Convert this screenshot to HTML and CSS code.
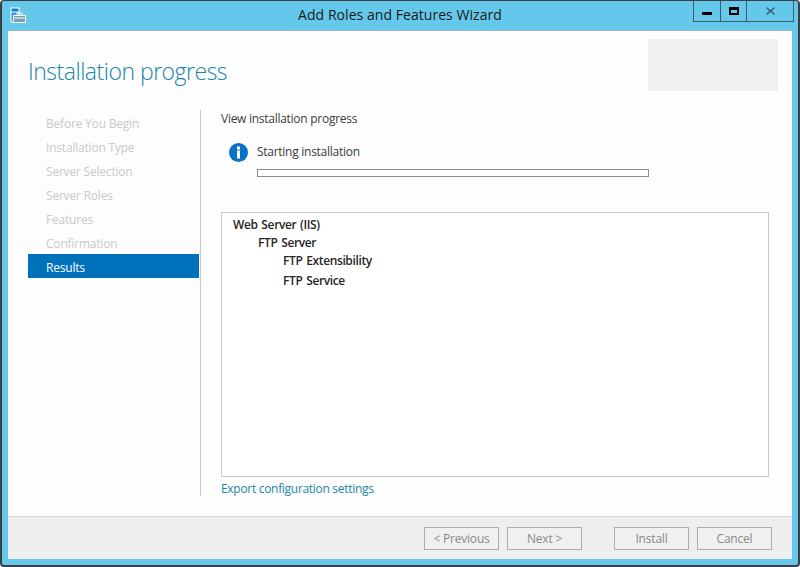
FILE: index.html
```html
<!DOCTYPE html>
<html lang="en">
<head>
<meta charset="utf-8">
<title>Add Roles and Features Wizard</title>
<link rel="stylesheet" href="styles.css">
</head>
<body>
<div class="window">
  <header class="titlebar">
    <svg class="app-icon" width="18" height="18" viewBox="0 0 18 18">
      <rect x="0.5" y="0.5" width="9" height="15" fill="#fff"/>
      <rect x="1.5" y="1.5" width="7" height="3" fill="#0f7fd6"/>
      <rect x="1.5" y="5.5" width="7" height="9" fill="#2f9ae8"/>
      <path d="M3 8h13v8H3z" fill="#fff"/>
      <path d="M4 9h11v6H4z" fill="#7d9bb2"/>
      <path d="M7 8V6h5v2" fill="none" stroke="#fff"/>
      <path d="M4 11h11" stroke="#fff"/>
    </svg>
    <h1 class="title">Add Roles and Features Wizard</h1>
    <div class="caption">
      <div class="cap cap-min"><span class="min-glyph"></span></div>
      <div class="cap cap-max"><span class="max-glyph"></span></div>
      <div class="cap cap-close">
        <svg width="9" height="8" viewBox="0 0 9 8"><path d="M1 0l3.5 3L8 0l1 1-3 3 3 3-1 1-3.500-3L1 8 0 7l3-3-3-3z" fill="#37677f"/></svg>
      </div>
    </div>
  </header>
  <main class="client">
    <div class="banner">
      <h2 class="heading">Installation progress</h2>
      <div class="server-box"></div>
    </div>
    <div class="middle">
      <nav class="steps">
        <a class="step">Before You Begin</a>
        <a class="step">Installation Type</a>
        <a class="step">Server Selection</a>
        <a class="step">Server Roles</a>
        <a class="step">Features</a>
        <a class="step">Confirmation</a>
        <a class="step active">Results</a>
      </nav>
      <section class="content">
        <p class="view">View installation progress</p>
        <div class="status">
          <svg class="info" width="19" height="19" viewBox="0 0 19 19">
            <circle cx="9.500" cy="9.500" r="9.500" fill="#0a72c4"/>
            <rect x="8" y="3.500" width="3" height="3" fill="#fff"/>
            <rect x="8" y="7.500" width="3" height="8" fill="#fff"/>
          </svg>
          <div class="status-main">
            <div class="status-text">Starting installation</div>
            <div class="progress"></div>
          </div>
        </div>
        <div class="listbox">
          <div class="l0">Web Server (IIS)</div>
          <div class="l1">FTP Server</div>
          <div class="l2">FTP Extensibility</div>
          <div class="l2 gap">FTP Service</div>
        </div>
        <a class="link">Export configuration settings</a>
      </section>
    </div>
    <footer class="footer">
      <button class="btn">&lt; Previous</button>
      <button class="btn next">Next &gt;</button>
      <button class="btn install">Install</button>
      <button class="btn">Cancel</button>
    </footer>
  </main>
</div>
</body>
</html>
```
FILE: styles.css
```css
* { box-sizing: border-box; }
html, body { margin: 0; padding: 0; background: #fff; }
body { width: 800px; height: 567px; overflow: hidden; font-family: "Open Sans", "Noto Sans", sans-serif; font-size: 12px; letter-spacing: -0.27px; color: #3c3c3c; }
.window { width: 800px; height: 567px; background: #64c8eb; border-left: 2px solid #3a3f44; border-top: 1px solid #3a3f44; border-right: 2px solid #3a3f44; border-bottom: 2px solid #3a3f44; border-radius: 4px; display: flex; flex-direction: column; padding: 0 6px 6px 6px; }
.titlebar { height: 29px; flex: none; display: flex; align-items: flex-start; position: relative; }
.app-icon { position: absolute; left: 2px; top: 6px; }
.title { margin: 0; width: 100%; text-align: center; font-weight: 400; font-size: 14px; letter-spacing: 0.05px; line-height: 28px; color: #1a1a1a; }
.caption { position: absolute; right: -2px; top: 0; display: flex; height: 21px; border: 1px solid #3d5a6c; border-top: 0; }
.cap { height: 20px; display: flex; justify-content: center; }
.cap-min { width: 27px; border-right: 1px solid #3d5a6c; }
.cap-max { width: 26px; border-right: 1px solid #3d5a6c; }
.cap-close { width: 46px; padding-top: 6px; }
.cap-close svg { display: block; }
.min-glyph { width: 10px; height: 3px; margin-top: 11px; background: #000; }
.max-glyph { width: 10px; height: 8px; margin-top: 6px; border: 2px solid #000; border-top-width: 3px; }
.client { flex: 1; min-height: 0; background: #fdfdfd; border-top: 1px solid #9fb6c2; display: flex; flex-direction: column; }
.banner { height: 79px; flex: none; display: flex; justify-content: space-between; padding: 8px 14px 0 20px; }
.heading { margin: 0; font-weight: 300; font-size: 23px; letter-spacing: -0.5px; line-height: 65px; color: #1a86a8; }
.server-box { width: 130px; height: 52px; background: #f1f1f1; }
.middle { flex: 1; min-height: 0; display: flex; }
.steps { width: 193px; flex: none; height: 386px; border-right: 1px solid #c8c8c8; padding: 0 0 0 20px; display: flex; flex-direction: column; }
.step { display: block; height: 24px; width: 171px; padding: 4px 0 0 18px; line-height: 20px; letter-spacing: -0.2px; color: #c9c9c9; }
.step.active { background: #0072bc; color: #fff; }
.content { flex: 1; padding: 1px 23px 0 20px; }
.view { margin: 0; line-height: 16px; }
.status { display: flex; margin: 16px 0 0 8px; }
.info { flex: none; margin: 0 9px 0 0; }
.status-main { width: 392px; }
.status-text { line-height: 18px; }
.progress { height: 8px; margin-top: 8px; border: 1px solid #8c8c8c; background: #fff; }
.listbox { height: 265px; margin-top: 35px; border: 1px solid #c8c8c8; background: #fff; padding: 3px 11px; color: #262626; font-weight: 600; letter-spacing: -0.37px; word-spacing: 1px; line-height: 18px; }
.l1 { padding-left: 25px; }
.l2 { padding-left: 50px; }
.gap { margin-top: 2px; }
.link { display: block; margin-top: 4px; color: #1a86a8; letter-spacing: -0.3px; line-height: 16px; }
.footer { height: 43px; flex: none; background: #eeeeee; border-top: 1px solid #d5d5d5; display: flex; align-items: flex-start; padding: 10px 20px 0 0; justify-content: flex-end; gap: 8px; }
.btn { width: 75px; height: 23px; padding: 0; background: #f0f0f0; border: 1px solid #adadad; font: inherit; letter-spacing: -0.2px; color: #8a8a8a; }
.install { margin-left: 24px; }
```
